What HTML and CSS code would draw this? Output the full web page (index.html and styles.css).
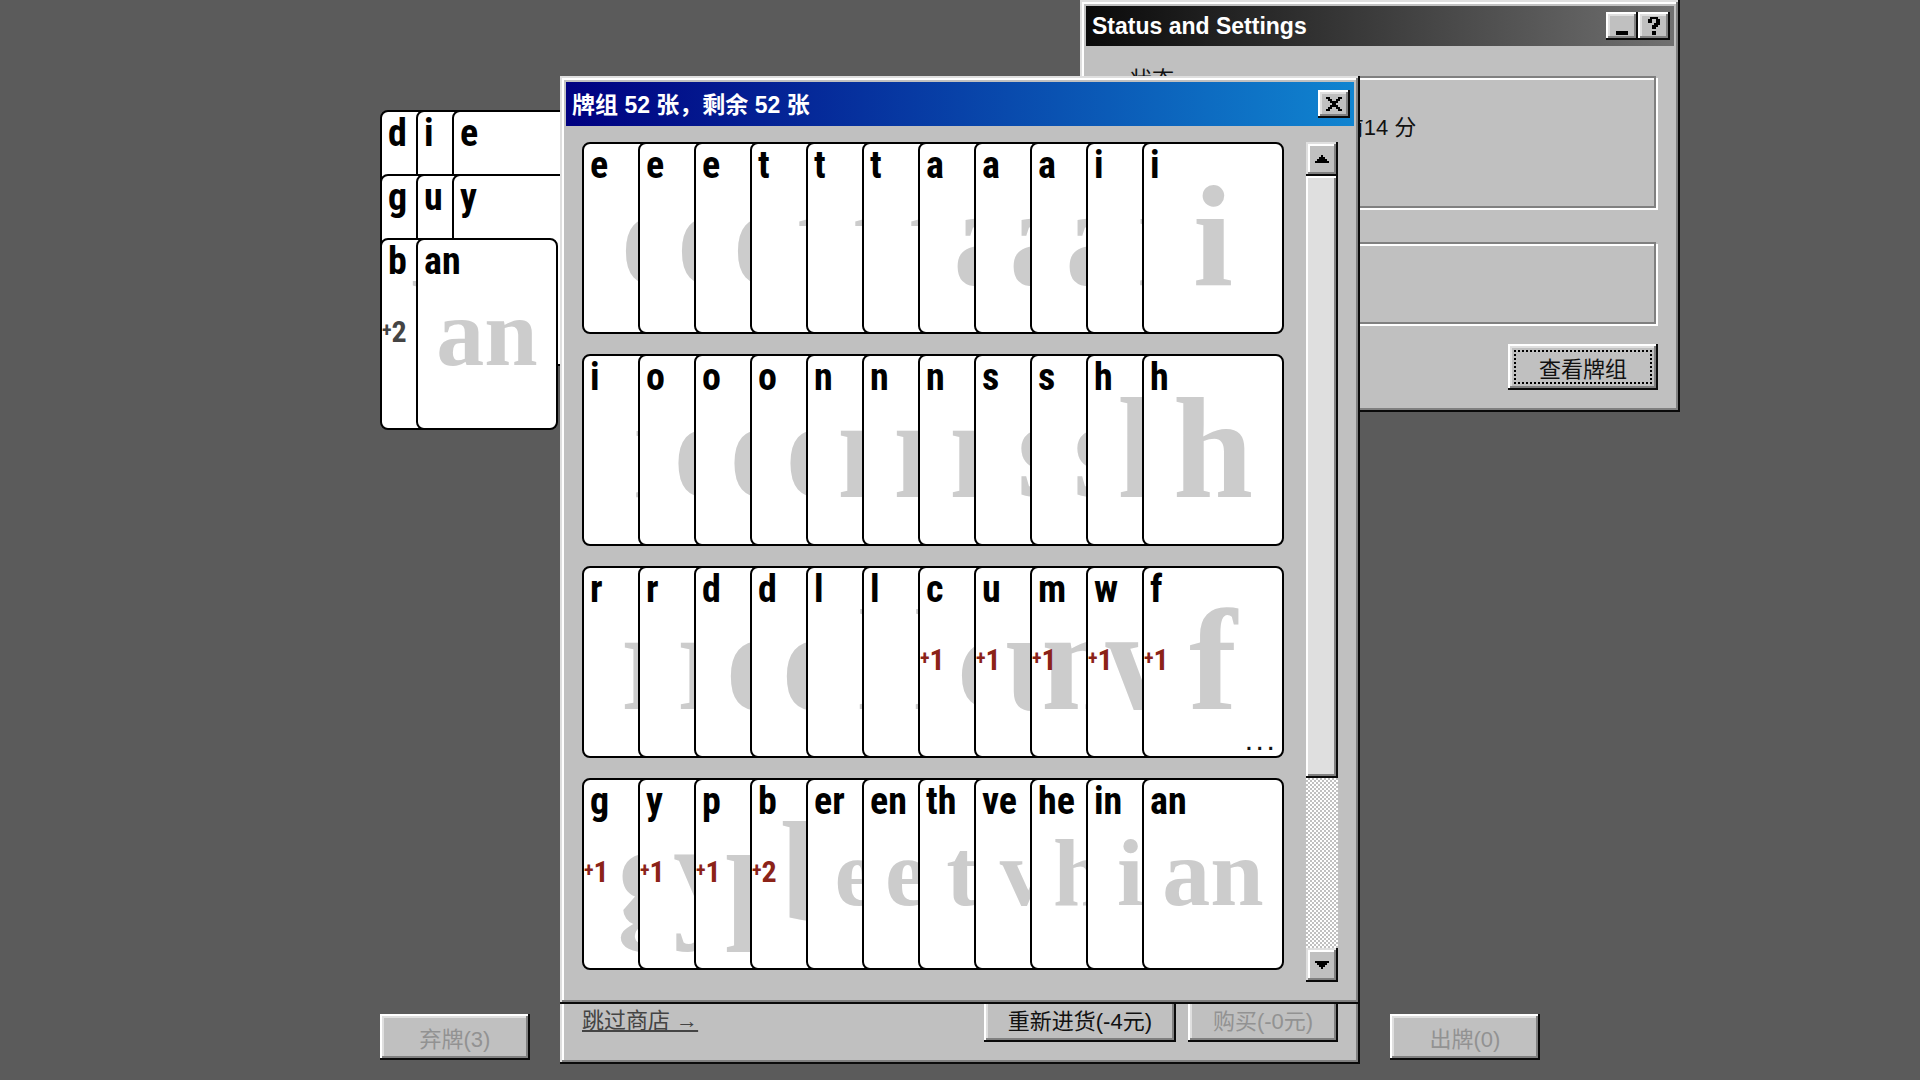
FILE: index.html
```html
<!DOCTYPE html>
<html lang="zh">

<head>
    <meta charset="UTF-8">
    <meta name="viewport" content="width=device-width, initial-scale=1.0">
    <title>牌组</title>
    <link rel="stylesheet" href="styles.css">
</head>

<body>
    <main class="board">
        <div class="hands" id="hands"></div>
        <div class="actions">
            <button class="btn" disabled>弃牌(3)</button>
            <button class="btn" disabled>出牌(0)</button>
        </div>
    </main>

    <section class="window shop">
        <div class="shop-footer">
            <a href="#" class="skip">跳过商店 →</a>
            <button class="btn restock">重新进货(-4元)</button>
            <button class="btn" disabled>购买(-0元)</button>
        </div>
    </section>

    <section class="window status">
        <header class="title-bar inactive">
            <h1 class="title">Status and Settings</h1>
            <div class="controls">
                <button class="control" aria-label="Minimize">
                    <svg width="12" height="18" viewBox="0 0 12 18"><rect x="0" y="14" width="12" height="4" /></svg>
                </button>
                <button class="control" aria-label="Help">
                    <svg width="12" height="18" viewBox="0 0 12 18">
                        <path d="M2 0h8v2h2v6h-2v2H8v2H4V8h2V6h2V2H4v4H0V2h2zM4 14h4v4H4z" />
                    </svg>
                </button>
            </div>
        </header>
        <div class="status-body">
            <div class="group score">
                <h2 class="legend">状态</h2>
                <p>前14 分</p>
            </div>
            <div class="group settings"></div>
            <button class="btn focused">查看牌组</button>
        </div>
    </section>

    <section class="window deck">
        <header class="title-bar">
            <h1 class="title">牌组 52 张，剩余 52 张</h1>
            <div class="controls">
                <button class="control" aria-label="Close">
                    <svg width="16" height="14" viewBox="0 0 16 14">
                        <path d="M0 0h4v2h2v2h4V2h2V0h4v2h-2v2h-2v2h-2v2h2v2h2v2h2v2h-4v-2h-2v-2H6v2H4v2H0v-2h2v-2h2V8h2V6H4V4H2V2H0z" />
                    </svg>
                </button>
            </div>
        </header>
        <div class="deck-body">
            <div class="deck-list" id="deck"></div>
            <div class="scrollbar">
                <button class="scroll-btn" aria-label="Up">
                    <svg width="14" height="8" viewBox="0 0 14 8"><path d="M6 0h2v2h2v2h2v2h2v2H0V6h2V4h2V2h2z" /></svg>
                </button>
                <div class="thumb"></div>
                <button class="scroll-btn down" aria-label="Down">
                    <svg width="14" height="8" viewBox="0 0 14 8"><path d="M0 0h14v2h-2v2h-2v2H8v2H6V6H4V4H2V2H0z" /></svg>
                </button>
            </div>
        </div>
    </section>

    <script>
        // letter or letter:bonus, a trailing * marks a card with a note
        let deckRows = [
            "e e e t t t a a a i i",
            "i o o o n n n s s h h",
            "r r d d l l c:1 u:1 m:1 w:1 f:1*",
            "g:1 y:1 p:1 b:2 er en th ve he in an"
        ];
        let handRows = ["d i e", "g u y", "b:2 an"];

        function card(item) {
            let note = item.endsWith("*");
            let parts = item.replace("*", "").split(":");
            let elm = `<div class="card">
                <span class="letter">${parts[0]}</span>
                <span class="mark ${parts[0].length > 1 ? "pair" : ""}" aria-hidden="true">${parts[0]}</span>`;
            if (parts[1]) {
                elm += `<span class="bonus"><small>+</small>${parts[1]}</span>`;
            }
            if (note) {
                elm += `<span class="note">...</span>`;
            }
            return elm + `</div>`;
        }

        function render(id, rows) {
            let elm = "";
            for (let i = 0; i < rows.length; i++) {
                elm += `<div class="row">${rows[i].split(" ").map(card).join("")}</div>`;
            }
            document.getElementById(id).innerHTML = elm;
        }

        render("hands", handRows);
        render("deck", deckRows);
    </script>
</body>

</html>
```

FILE: styles.css
```css
* {
    box-sizing: border-box;
}

body {
    margin: 0;
    background: #5b5b5b;
    color: #111;
    font-family: "Liberation Sans", "Noto Sans CJK SC", sans-serif;
    font-size: 22px;
    line-height: 28px;
    overflow: hidden;
}

h1,
h2,
p {
    margin: 0;
    font-size: 22px;
    font-weight: normal;
}

.board {
    display: flex;
    flex-direction: column;
    justify-content: space-between;
    max-width: 1160px;
    height: 100vh;
    margin: 0 auto;
    padding: 110px 0 20px;
}

.actions {
    display: flex;
    justify-content: space-between;
}

/* cards */
.row {
    display: flex;
}

.card {
    position: relative;
    flex: none;
    width: 142px;
    height: 192px;
    border: 2px solid #000;
    border-radius: 8px;
    background: #fff;
    overflow: hidden;
}

.card + .card {
    margin-left: -86px;
}

.hands .card + .card {
    margin-left: -106px;
}

.hands .row + .row {
    margin-top: -128px;
}

.letter {
    position: absolute;
    top: 1px;
    left: 6px;
    z-index: 1;
    color: #000;
    font: bold 38px/40px "Liberation Sans Narrow", "Roboto Condensed", "Liberation Sans", sans-serif;
}

.mark {
    position: absolute;
    top: 18px;
    left: -20px;
    right: -20px;
    color: #ccc;
    font: bold 144px/150px "Liberation Serif", serif;
    text-align: center;
}

.mark.pair {
    top: 43px;
    font-size: 96px;
    line-height: 100px;
}

.bonus {
    position: absolute;
    top: 73px;
    left: 0;
    color: #8b2318;
    font: bold 30px/34px "Liberation Sans Narrow", "Roboto Condensed", "Liberation Sans", sans-serif;
}

.bonus small {
    font-size: 20px;
    vertical-align: 5px;
}

.hands .bonus {
    color: #444;
}

.note {
    position: absolute;
    right: 6px;
    bottom: 2px;
    font: bold 18px/20px "DejaVu Sans Mono", monospace;
}

/* windows */
.window {
    position: absolute;
    padding: 6px;
    background: #c0c0c0;
    box-shadow: inset -2px -2px #0a0a0a, inset 2px 2px #dfdfdf, inset -4px -4px #808080, inset 4px 4px #fff;
}

.title-bar {
    display: flex;
    align-items: center;
    justify-content: space-between;
    height: 44px;
    padding: 0 4px 0 6px;
    background: linear-gradient(90deg, #000080, #1084d0);
    color: #fff;
}

.title-bar.inactive {
    height: 40px;
    background: linear-gradient(90deg, #0a0a0a, #707070);
}

.title {
    font-size: 23px;
    font-weight: bold;
}

.controls {
    display: flex;
}

button {
    border: none;
    padding: 0;
    background: #c0c0c0;
    color: #111;
    font: inherit;
    box-shadow: inset -2px -2px #0a0a0a, inset 2px 2px #fff, inset -4px -4px #808080, inset 4px 4px #dfdfdf;
}

.btn {
    min-width: 150px;
    height: 46px;
    padding: 6px 24px 0;
}

.btn:disabled {
    color: #929292;
}

.btn.focused {
    outline: 2px dotted #000;
    outline-offset: -8px;
}

.control,
.scroll-btn {
    display: flex;
    align-items: center;
    justify-content: center;
    width: 32px;
    height: 28px;
}

.status {
    top: 0;
    left: calc(50% + 120px);
    width: 600px;
}

.status-body {
    display: flex;
    flex-direction: column;
    padding: 30px 18px 16px 16px;
}

.group {
    border: 2px solid #808080;
    box-shadow: 2px 2px #fff, inset 2px 2px #fff;
}

.score {
    height: 132px;
    margin-bottom: 34px;
    text-align: center;
}

.legend {
    width: max-content;
    margin: -12px 0 20px 18px;
    padding: 0 8px;
    background: #c0c0c0;
}

.settings {
    height: 82px;
    margin-bottom: 20px;
}

.status-body .btn {
    align-self: flex-end;
    margin-right: -2px;
}

.shop {
    top: 76px;
    left: calc(50% - 400px);
    display: flex;
    align-items: flex-end;
    width: 800px;
    height: 988px;
    padding: 22px;
}

.shop-footer {
    display: flex;
    align-items: center;
    gap: 12px;
    width: 100%;
}

.skip {
    margin-right: auto;
    padding-top: 4px;
    color: #444;
    text-underline-offset: 2px;
    text-decoration-thickness: 2px;
}

.restock {
    min-width: 192px;
}

.deck {
    top: 76px;
    left: calc(50% - 400px);
    width: 800px;
}

.deck .title {
    padding-top: 2px;
}

.deck-body {
    display: flex;
    justify-content: space-between;
    padding: 16px;
}

.deck-list {
    display: flex;
    flex-direction: column;
    gap: 20px;
    height: 840px;
}

.scrollbar {
    display: flex;
    flex-direction: column;
    width: 32px;
    background: repeating-conic-gradient(#c0c0c0 0 25%, #fff 0 50%) 0 0 / 4px 4px;
}

.scroll-btn {
    height: 34px;
    box-shadow: inset -2px -2px #0a0a0a, inset 2px 2px #dfdfdf, inset -4px -4px #808080, inset 4px 4px #fff;
}

.scroll-btn.down {
    margin-top: auto;
}

.thumb {
    height: 602px;
    background: #dfdfdf;
    box-shadow: inset -2px -2px #0a0a0a, inset 2px 2px #fff, inset -4px -4px #808080;
}
```
